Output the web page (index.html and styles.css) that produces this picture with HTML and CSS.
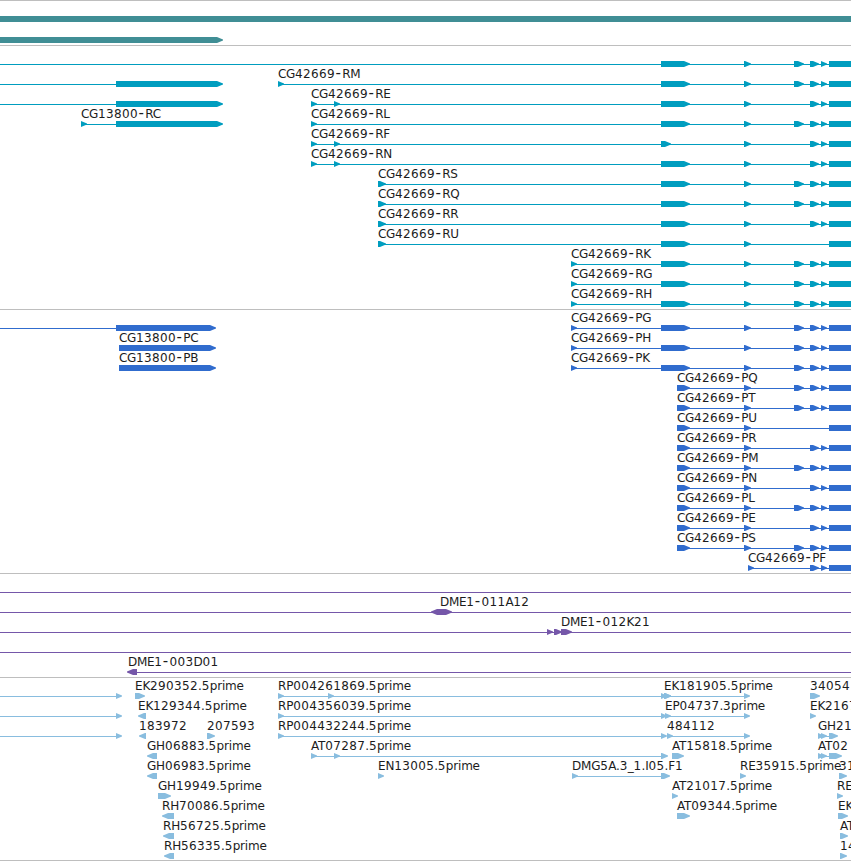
FILE: index.html
```
<!DOCTYPE html>
<html lang="en">

<head>
    <meta charset="UTF-8">
    <meta name="viewport" content="width=device-width, initial-scale=1.0">
    <title>Region view</title>
    <link rel="stylesheet" href="styles.css">
</head>

<body>
    <main class="browser">
        <section class="track genes" id="genes"></section>
        <section class="track transcripts" id="transcripts"></section>
        <section class="track cds" id="cds"></section>
        <section class="track bacs" id="bacs"></section>
        <section class="track ests" id="ests"></section>
    </main>

    <script src="tracks.js"></script>
</body>

</html>
```
FILE: styles.css
```
body {
    margin: 0;
    background-color: #fff;
    font-family: "DejaVu Sans", sans-serif;
    overflow: hidden;
}

.browser {
    width: 851px;
    height: 861px;
    overflow: hidden;
}

.track {
    display: flex;
    flex-direction: column;
    padding: 1px 0 2px;
    border-top: 1px solid #bebebe;
}

.row {
    display: block;
    width: 851px;
    height: 20px;
    fill: currentColor;
    flex-shrink: 0;
}

.row text {
    fill: #1c1c1c;
    font-size: 12px;
    letter-spacing: -0.3px;
}

.row .num {
    letter-spacing: 0.37px;
}

.row .dash {
    font-size: 15px;
    letter-spacing: 1.2px;
}

.genes {
    gap: 1px;
    color: #408e95;
}

.transcripts {
    color: #009dbf;
}

.cds {
    color: #306cce;
}

.bacs {
    color: #7557a9;
}

.ests {
    color: #89bddf;
    padding-bottom: 1px;
    border-bottom: 1px solid #bebebe;
}

.ests text {
    letter-spacing: -0.2px;
}
```
FILE: tracks.js
```
var END = 851;

// exons shared by the CG42669 models
var A = [661, 690];
var B = [744, 751];
var C = [794, 804];
var D = [810, 819];
var E = [821, 827];
var F = [829, 851, "box"];

// each model: label, label x, intron line [from, to], exons [from, to, shape]
function model(label, x, line, exons) {
    return { label: label, x: x, line: line, exons: exons };
}

function gene(label, x, exons) {
    return model(label, x, [x, END], exons);
}

function read(label, x, end, shape) {
    return model(label, x, null, [[x, end, shape]]);
}

var tracks = {
    genes: [
        [model("", 0, null, [[0, END, "box"]])],
        [model("", 0, null, [[0, 223]])]
    ],
    transcripts: [
        [gene("", 0, [A, B, C, D, E, F])],
        [model("", 0, [0, 116], [[116, 223]]), gene("CG42669-RM", 278, [[278, 284], A, B, C, D, E, F])],
        [model("", 0, [0, 116], [[116, 223]]), gene("CG42669-RE", 311, [[311, 317], [334, 340], A, B, D, E, F])],
        [model("CG13800-RC", 81, [81, 116], [[81, 87], [116, 223]]), gene("CG42669-RL", 311, [[311, 317], A, B, C, D, E, F])],
        [gene("CG42669-RF", 311, [[311, 317], [334, 340], [661, 671], B, D, E, F])],
        [gene("CG42669-RN", 311, [[311, 317], [334, 340], A, B, D, E, F])],
        [gene("CG42669-RS", 378, [[378, 386], A, B, C, D, E, F])],
        [gene("CG42669-RQ", 378, [[378, 386], A, B, C, D, E, F])],
        [gene("CG42669-RR", 378, [[378, 386], A, B, D, E, F])],
        [gene("CG42669-RU", 378, [[378, 386], A, B, F])],
        [gene("CG42669-RK", 571, [[571, 577], A, B, C, D, E, F])],
        [gene("CG42669-RG", 571, [[571, 577], A, B, C, D, E, F])],
        [gene("CG42669-RH", 571, [[571, 577], A, B, C, D, E, F])]
    ],
    cds: [
        [model("", 0, [0, 116], [[116, 216]]), gene("CG42669-PG", 571, [[571, 577], A, B, C, D, E, F])],
        [read("CG13800-PC", 119, 216), gene("CG42669-PH", 571, [[571, 577], A, B, C, D, E, F])],
        [read("CG13800-PB", 119, 216), gene("CG42669-PK", 571, [[571, 577], A, B, C, D, E, F])],
        [gene("CG42669-PQ", 677, [[677, 690], B, C, D, E, F])],
        [gene("CG42669-PT", 677, [[677, 690], B, C, D, E, F])],
        [gene("CG42669-PU", 677, [[677, 690], B, F])],
        [gene("CG42669-PR", 677, [[677, 690], B, D, E, F])],
        [gene("CG42669-PM", 677, [[677, 690], B, C, D, E, F])],
        [gene("CG42669-PN", 677, [[677, 690], B, D, E, F])],
        [gene("CG42669-PL", 677, [[677, 690], B, C, D, E, F])],
        [gene("CG42669-PE", 677, [[677, 690], B, D, E, F])],
        [gene("CG42669-PS", 677, [[677, 690], B, C, D, E, F])],
        [gene("CG42669-PF", 748, [[748, 754], D, E, F])]
    ],
    bacs: [
        [gene("", 0, [])],
        [model("DME1-011A12", 440, [0, END], [[431, 452, "both"]])],
        [model("DME1-012K21", 561, [0, END], [[547, 553], [554, 562], [561, 572]])],
        [gene("", 0, [])],
        [gene("DME1-003D01", 128, [[127, 137, "left"]])]
    ],
    ests: [
        [
            model("", 0, [0, 120], [[116, 122]]),
            read("EK290352.5prime", 135, 145),
            model("RP004261869.5prime", 278, [278, 666], [[278, 284], [328, 334], [661, 667], [664, 671]]),
            model("EK181905.5prime", 664, [664, 748], [[664, 671], [744, 750]]),
            read("34054", 810, 820)
        ],
        [
            model("", 0, [0, 120], [[116, 122]]),
            read("EK129344.5prime", 138, 146, "left"),
            model("RP004356039.5prime", 278, [278, 666], [[278, 284], [661, 667]]),
            model("EP04737.3prime", 665, [665, 748], [[665, 671], [744, 750]]),
            read("EK2167", 810, 816)
        ],
        [
            model("", 0, [0, 120], [[116, 122]]),
            read("183972", 139, 146, "left"),
            read("207593", 207, 215),
            model("RP004432244.5prime", 278, [278, 666], [[278, 284], [661, 667]]),
            model("484112", 667, [667, 748], [[667, 673], [744, 750]]),
            model("GH21", 818, [818, 836], [[818, 824], [821, 827], [829, 838]])
        ],
        [
            read("GH06883.5prime", 147, 157, "left"),
            model("AT07287.5prime", 311, [311, 667], [[311, 317], [334, 340], [661, 668]]),
            read("AT15818.5prime", 672, 684),
            model("AT02", 818, [818, 836], [[818, 824], [821, 827], [829, 842]])
        ],
        [
            read("GH06983.5prime", 147, 157, "left"),
            read("EN13005.5prime", 378, 384),
            model("DMG5A.3_1.I05.F1", 572, [572, 668], [[572, 578], [661, 670]]),
            read("RE35915.5prime", 740, 746),
            read("31", 839, 847)
        ],
        [
            read("GH19949.5prime", 158, 171),
            read("AT21017.5prime", 672, 678),
            read("RE", 837, 843)
        ],
        [
            read("RH70086.5prime", 162, 174, "left"),
            read("AT09344.5prime", 677, 690),
            read("EK", 838, 848)
        ],
        [
            read("RH56725.5prime", 163, 174, "left"),
            read("AT", 840, 848)
        ],
        [
            read("RH56335.5prime", 164, 174, "left"),
            read("14", 840, 847)
        ]
    ]
};

function exonPoints(from, to, shape) {
    var tip = Math.min(6, to - from);
    var left = shape === "left" || shape === "both" ? from + tip : from;
    var right = shape === "left" || shape === "box" ? to : to - tip;
    var points = [[left, 14], [right, 14]];
    if (right !== to) {
        points.push([to, 16.5], [to, 17.5]);
    }
    points.push([right, 20], [left, 20]);
    if (left !== from) {
        points.push([from, 17.5], [from, 16.5]);
    }
    return points.join(" ");
}

// digits are spaced to an even 8px, the dash is drawn wider than the letters
function labelText(label) {
    return label
        .replace(/\d+/g, '<tspan class="num">$&</tspan>')
        .replace("-", '<tspan class="dash" dx="0.5">-</tspan>');
}

function drawRow(models) {
    var shapes = "";
    var labels = "";
    models.forEach(function (m) {
        if (m.line) {
            shapes += '<rect x="' + m.line[0] + '" y="17" width="' + (m.line[1] - m.line[0]) + '" height="1"/>';
        }
        m.exons.forEach(function (e) {
            shapes += '<polygon points="' + exonPoints(e[0], e[1], e[2]) + '"/>';
        });
        if (m.label) {
            labels += '<text x="' + m.x + '" y="11">' + labelText(m.label) + '</text>';
        }
    });
    return '<svg class="row" viewBox="0 0 851 20">' + shapes + labels + '</svg>';
}

Object.keys(tracks).forEach(function (id) {
    document.getElementById(id).innerHTML = tracks[id].map(drawRow).join("");
});
```
